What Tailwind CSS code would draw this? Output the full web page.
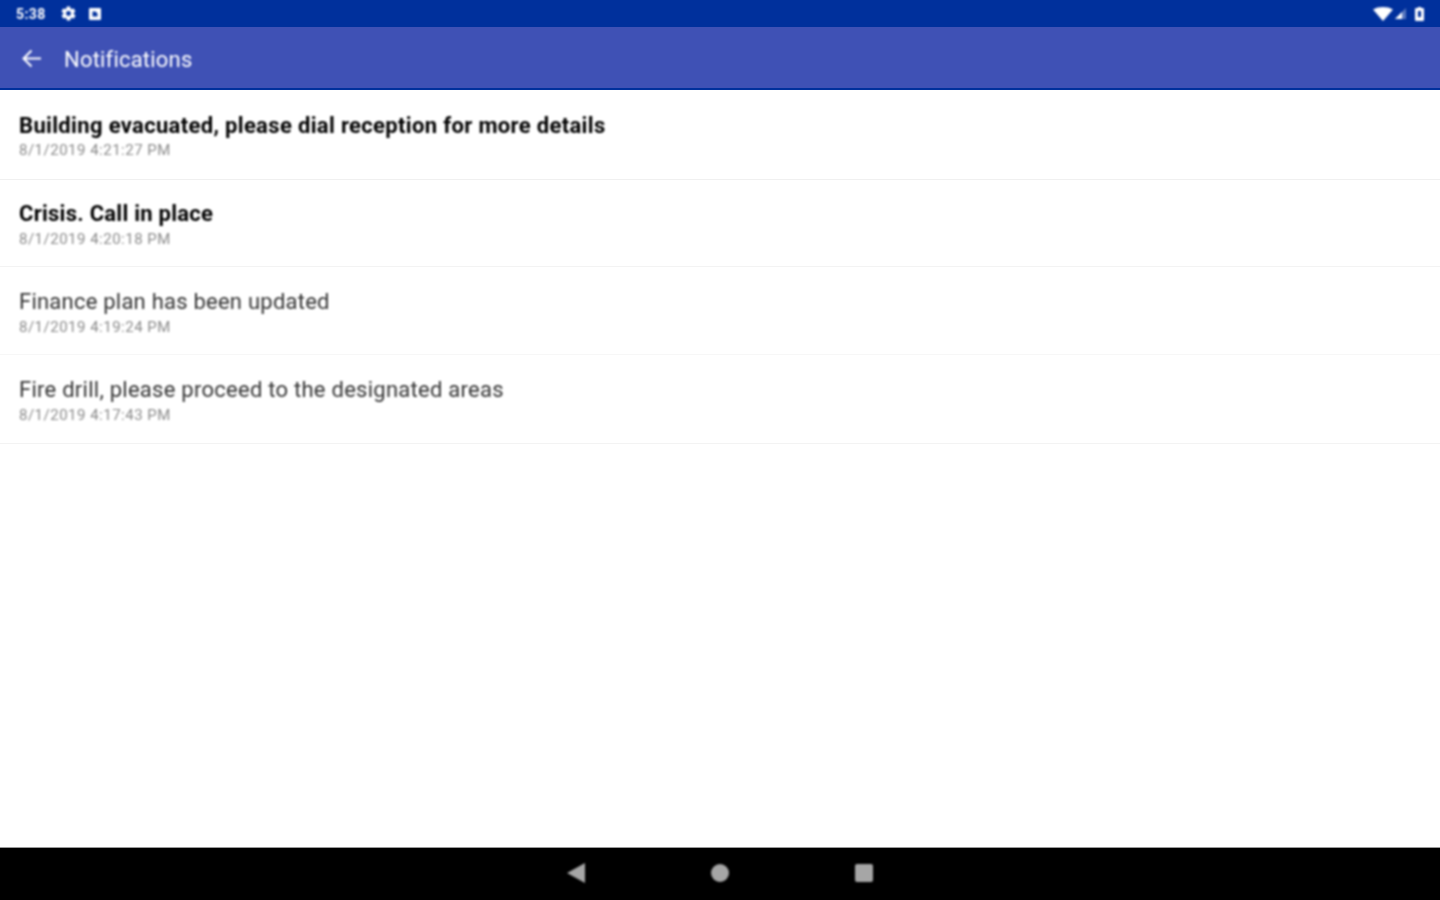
<!doctype html>
<html lang="en">
  <head>
    <meta charset="UTF-8" />
    <title>Notifications</title>
    <script src="https://cdn.jsdelivr.net/npm/@tailwindcss/browser@4"></script>
  </head>
  <body class="bg-white font-['Roboto',sans-serif]">
    <!-- the reference is an upscaled capture, so text and icons get a slight blur -->
    <div class="flex flex-col h-[900px] w-[1440px] overflow-hidden">
      <!-- Status bar -->
      <div class="h-[27px] bg-[#00309c] flex items-center justify-between pl-[16px] pr-[16px] text-white">
        <div class="flex items-center blur-[0.8px]">
          <span class="text-[14px] font-bold w-[31px] tracking-[0.4px] pt-[2px]">5:38</span>
          <svg class="ml-[13px]" width="17" height="17" viewBox="0 0 24 24" fill="#fff"><path fill-rule="evenodd" d="M19.4 13c.1-.3.1-.7.1-1s0-.7-.1-1l2.1-1.6c.2-.2.2-.4.1-.6l-2-3.5c-.1-.2-.4-.3-.6-.2l-2.5 1c-.5-.4-1.1-.7-1.7-1l-.4-2.6c0-.3-.2-.5-.5-.5h-4c-.3 0-.5.2-.5.4l-.4 2.7c-.6.2-1.2.6-1.7 1l-2.5-1c-.2-.1-.5 0-.6.2l-2 3.5c-.1.2-.1.5.1.6L4.6 11c-.1.3-.1.7-.1 1s0 .7.1 1l-2.1 1.6c-.2.2-.2.4-.1.6l2 3.5c.1.2.4.3.6.2l2.5-1c.5.4 1.1.7 1.7 1l.4 2.6c0 .3.2.5.5.5h4c.3 0 .5-.2.5-.4l.4-2.7c.6-.2 1.2-.6 1.7-1l2.5 1c.2.1.5 0 .6-.2l2-3.5c.1-.2.1-.5-.1-.6L19.4 13zM12 15.5a3.5 3.5 0 1 1 0-7 3.5 3.5 0 0 1 0 7z"/></svg>
          <svg class="ml-[11px]" width="14" height="14" viewBox="0 0 14 14" fill="#fff"><path fill-rule="evenodd" d="M2 1h10a1 1 0 0 1 1 1v10a1 1 0 0 1-1 1H2a1 1 0 0 1-1-1V2a1 1 0 0 1 1-1zm2.5 3.5v5h5v-3l-2-2h-3z"/></svg>
        </div>
        <div class="flex items-center blur-[0.8px]">
          <svg class="mr-[1px]" width="20" height="14" viewBox="0 0 20 14" fill="#fff"><path d="M0 2.5C2.800.8 6.200 0 10 0s7.200.8 10 2.500L10 14z"/></svg>
          <svg class="ml-[1px]" width="11" height="11" viewBox="0 0 11 11"><path d="M11 0v11H0z" fill="#fff" fill-opacity=".35"/><path d="M7 4v7H0z" fill="#fff"/></svg>
          <svg class="ml-[9px]" width="9" height="14" viewBox="0 0 9 14"><path fill="#fff" fill-rule="evenodd" d="M3 0h3v1h2a1 1 0 0 1 1 1v11a1 1 0 0 1-1 1H1a1 1 0 0 1-1-1V2a1 1 0 0 1 1-1h2zM3 4v6h3V4z"/></svg>
        </div>
      </div>

      <!-- Toolbar -->
      <div class="h-[63px] bg-[#3f51b5] border-b-[2px] border-[#00309c] flex items-center pl-[21px] pt-[3px]">
        <svg class="-mt-[1px] blur-[0.8px]" width="21" height="21" viewBox="0 0 21 21" fill="none" stroke="#fff" stroke-width="2"><path d="M20 10.500H3M10.500 2.500l-8 8 8 8"/></svg>
        <h1 class="ml-[22px] mt-[2px] text-[22px] tracking-[0.2px] text-white leading-none blur-[0.8px]">Notifications</h1>
      </div>

      <!-- Notification list -->
      <ul class="flex-1">
        <li class="h-[90px] pl-[19px] pt-[23px] border-b border-[#f0f0f0]">
          <p class="text-[22px] leading-[26px] font-bold tracking-[0.34px] text-black blur-[0.8px]">Building evacuated, please dial reception for more details</p>
          <p class="text-[15px] leading-[20px] mt-[1px] text-[#8a8a8a] tracking-[0.5px] blur-[0.8px]">8/1/2019 4:21:27 PM</p>
        </li>
        <li class="h-[87px] pl-[19px] pt-[21px] border-b border-[#f3f3f3]">
          <p class="text-[22px] leading-[26px] font-bold tracking-[0.26px] text-black blur-[0.8px]">Crisis. Call in place</p>
          <p class="text-[15px] leading-[20px] mt-[2px] text-[#8a8a8a] tracking-[0.5px] blur-[0.8px]">8/1/2019 4:20:18 PM</p>
        </li>
        <li class="h-[88px] pl-[19px] pt-[22px] border-b border-[#f7f7f7]">
          <p class="text-[22px] leading-[26px] tracking-[0.23px] text-[#333333] blur-[0.8px]">Finance plan has been updated</p>
          <p class="text-[15px] leading-[20px] mt-[2px] text-[#8a8a8a] tracking-[0.5px] blur-[0.8px]">8/1/2019 4:19:24 PM</p>
        </li>
        <li class="h-[89px] pl-[19px] pt-[22px] border-b border-[#f3f3f3]">
          <p class="text-[22px] leading-[26px] tracking-[0.26px] text-[#333333] blur-[0.8px]">Fire drill, please proceed to the designated areas</p>
          <p class="text-[15px] leading-[20px] mt-[2px] text-[#8a8a8a] tracking-[0.5px] blur-[0.8px]">8/1/2019 4:17:43 PM</p>
        </li>
      </ul>

      <!-- Navigation bar -->
      <div class="h-[53px] bg-black border-t border-[#999999] flex items-center justify-center gap-[126px] pb-[2px]">
        <svg class="blur-[0.8px]" width="18" height="20" viewBox="0 0 18 20" fill="#a6a6a6"><path d="M0 10 18 0v20z"/></svg>
        <div class="w-[18px] h-[18px] rounded-full bg-[#a6a6a6] blur-[0.8px]"></div>
        <div class="w-[18px] h-[18px] rounded-[2px] bg-[#a6a6a6] blur-[0.8px]"></div>
      </div>
    </div>
  </body>
</html>
